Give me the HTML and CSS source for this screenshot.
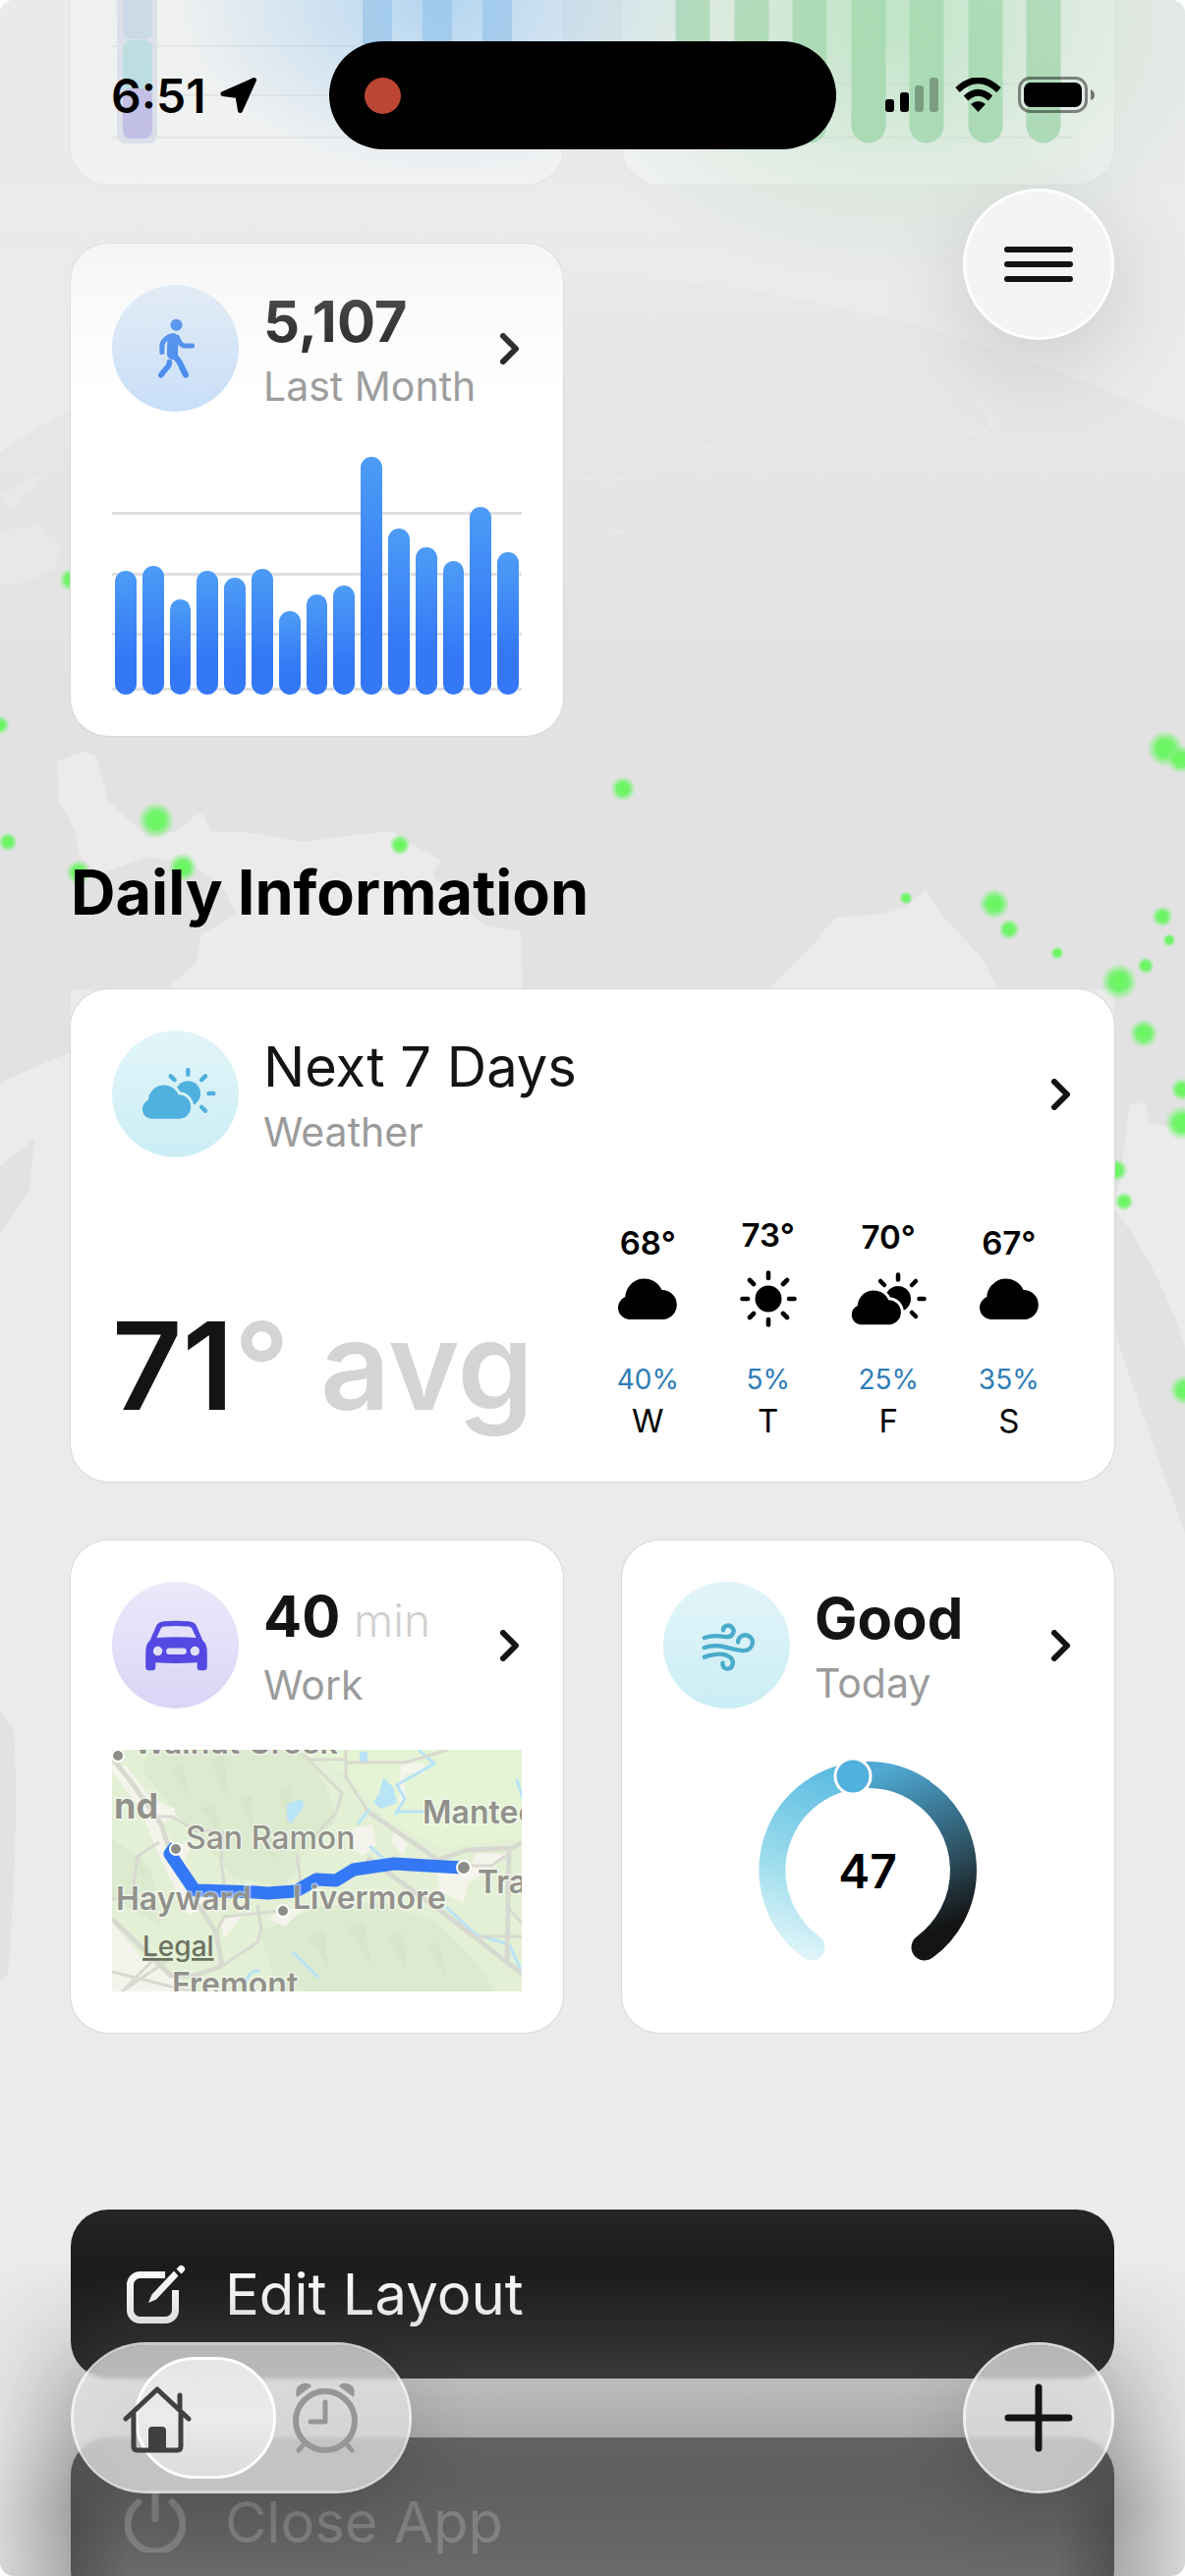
FILE: index.html
```html
<!DOCTYPE html>
<html lang="en">
<head>
    <meta charset="UTF-8">
    <meta name="viewport" content="width=device-width, initial-scale=1.0">
    <title>Dashboard</title>
    <link rel="stylesheet" href="styles.css">
</head>
<body>

<!-- shared icons -->
<svg class="defs" aria-hidden="true">
    <defs>
        <radialGradient id="glow">
            <stop offset="0" stop-color="#66f75c"/>
            <stop offset=".5" stop-color="#6ff468" stop-opacity=".95"/>
            <stop offset="1" stop-color="#8df28d" stop-opacity="0"/>
        </radialGradient>
        <linearGradient id="land" gradientUnits="userSpaceOnUse" x1="0" y1="280" x2="0" y2="700">
            <stop offset="0" stop-color="#e8e8e8"/>
            <stop offset="1" stop-color="#e2e2e2"/>
        </linearGradient>
        <mask id="cloudCut">
            <rect x="-10" y="-10" width="100" height="80" fill="#fff"/>
            <path transform="translate(0 18) scale(.84)" d="M13 42H48.500A15 15 0 0 0 46.600 12.100A19.500 19.500 0 0 0 9.300 19A12 12 0 0 0 13 42Z" fill="#000" stroke="#000" stroke-width="7"/>
        </mask>
    </defs>
    <symbol id="cloud" viewBox="0 0 64 42">
        <path d="M13 42H48.500A15 15 0 0 0 46.600 12.100A19.500 19.500 0 0 0 9.300 19A12 12 0 0 0 13 42Z" fill="currentColor"/>
    </symbol>
    <symbol id="sun" viewBox="0 0 58 58">
        <circle cx="29" cy="29" r="13.500" fill="currentColor"/>
        <path d="M29 2.500V8M29 50v5.500M2.500 29H8M50 29h5.500M10 10l4 4M44 44l4 4M10 48l4-4M44 14l4-4" stroke="currentColor" stroke-width="4.600" stroke-linecap="round"/>
    </symbol>
    <symbol id="cloud-sun" viewBox="0 0 78 54">
        <circle cx="49" cy="27" r="13" fill="currentColor" mask="url(#cloudCut)"/>
        <path d="M49 2.500V7.500M63 13l4-4M70.500 27h5M63 41l4 4M35 13l-4-4" stroke="currentColor" stroke-width="4.500" stroke-linecap="round"/>
        <path transform="translate(0 18) scale(.84)" d="M13 42H48.500A15 15 0 0 0 46.600 12.100A19.500 19.500 0 0 0 9.300 19A12 12 0 0 0 13 42Z" fill="currentColor"/>
    </symbol>
    <symbol id="chevron" viewBox="0 0 20 32">
        <path d="M3 3l13 13L3 29" fill="none" stroke="currentColor" stroke-width="6" stroke-linecap="round" stroke-linejoin="round"/>
    </symbol>
</svg>

<div class="screen">
    <!-- world map wallpaper -->
    <svg class="wallpaper" viewBox="0 0 1206 2622" preserveAspectRatio="xMidYMin slice" aria-hidden="true">
        <path fill="url(#land)" d="M0 460Q280 275 640 283Q920 300 1206 432V1150L1170 1143L1165 1123H1150L1140 1200L1134 1230Q1180 1290 1206 1370V1450Q1150 1400 1134 1340V1007H72V1071L50 1080L0 1102Z"/>
        <path fill="#ebebeb" d="M58 775L85 765L98 770L110 815L150 852L180 846L200 829L207 829L214 846L262 848L307 857L360 850L400 846L420 860L450 876L440 890L461 913L492 941L530 948L532 1010H165L200 980L204 952L240 930L225 900L195 880L150 872L100 890L80 870L76 845L60 815Z"/>
        <path fill="#ebebeb" d="M781 1007L820 970L850 934L900 930L923 923L942 906L961 934L1000 976L1015 1007Z"/>
        <path fill="#e8e8e8" d="M0 540L40 535L62 555L55 580L30 592L0 596ZM575 487Q610 478 652 486L620 490ZM606 542l36-3-14 6ZM0 505L60 470L10 520Z"/>
        <path fill="#e2e2e2" d="M35 1159L30 1210L0 1257V1187ZM1138 1243L1170 1340L1206 1400V1560L1170 1460L1136 1360ZM0 1740L14 1760Q20 1860 8 2010L0 2016Z"/>
        <path fill="none" stroke="#e9e9e9" stroke-width="3" d="M905 392q30 4 40 26M992 405q26 20 14 32q-10 6-22 2M715 452l16 10M80 852l6 10"/>
        <g fill="url(#glow)">
            <circle cx="72" cy="590" r="12"/><circle cx="0" cy="738" r="10"/><circle cx="8" cy="857" r="10"/>
            <circle cx="159" cy="835" r="19"/><circle cx="186" cy="883" r="15"/><circle cx="80" cy="888" r="13"/>
            <circle cx="407" cy="860" r="11"/><circle cx="634" cy="803" r="13"/><circle cx="922" cy="914" r="7"/>
            <circle cx="1012" cy="920" r="16"/><circle cx="1027" cy="946" r="11"/><circle cx="1076" cy="970" r="7"/>
            <circle cx="1183" cy="933" r="11"/><circle cx="1190" cy="957" r="7"/><circle cx="1166" cy="983" r="9"/>
            <circle cx="1139" cy="999" r="19"/><circle cx="1186" cy="762" r="19"/><circle cx="1202" cy="773" r="15"/>
            <circle cx="1164" cy="1052" r="15"/><circle cx="1203" cy="1109" r="12"/><circle cx="1203" cy="1143" r="18"/>
            <circle cx="1136" cy="1191" r="12"/><circle cx="1144" cy="1223" r="10"/><circle cx="1206" cy="1415" r="16"/>
        </g>
    </svg>

    <main class="content">
        <div class="row">
            <div class="card card-tail">
                <svg class="tail-chart" viewBox="0 0 417 146" aria-hidden="true">
                    <path d="M0 47h417M0 97h417M0 140h417" stroke="#ddd" stroke-width="2"/>
                    <path d="M5 0h41v136q0 10-10 10H15q-10 0-10-10z" fill="#c4cbe6"/>
                    <path d="M11 0h30v32q0 8-8 8H19q-8 0-8-8z" fill="#8fb4e0"/>
                    <rect x="11" y="41" width="30" height="60" rx="8" fill="#63c4d0"/>
                    <rect x="11" y="90" width="30" height="51" rx="8" fill="#7d6fe0"/>
                    <path d="M255 0h30v120h-30zM316 0h30v120h-30zM377 0h30v120h-30z" fill="#4f9ee4"/>
                </svg>
            </div>
            <div class="card card-tail">
                <svg class="tail-chart" viewBox="0 0 417 146" aria-hidden="true">
                    <path d="M0 85h417M0 140h417" stroke="#ddd" stroke-width="2"/>
                    <path d="M30-20v148M90-20v148M149-20v148M209-20v148M268-20v148M328-20v148M387-20v148" stroke="#3cb95a" stroke-width="35" stroke-linecap="round"/>
                </svg>
            </div>
        </div>

        <div class="row">
            <section class="card">
                <a class="card-head" href="#steps">
                    <svg class="badge badge-steps" viewBox="0 0 128 128" aria-hidden="true">
                        <circle cx="65" cy="40.500" r="6" fill="currentColor"/>
                        <g fill="none" stroke="currentColor" stroke-linecap="round" stroke-linejoin="round">
                            <path d="M61.500 54L61 70" stroke-width="11"/>
                            <path d="M58 52q-7 4-7.500 9V68" stroke-width="5"/>
                            <path d="M66 53q3 8 7 8.500H81" stroke-width="5"/>
                            <path d="M62 71q6 5 8 11L74.500 91" stroke-width="6"/>
                            <path d="M58 78q0 4-3 6L49.500 91" stroke-width="5.500"/>
                        </g>
                    </svg>
                    <span class="card-titles">
                        <strong class="title bold">5,107</strong>
                        <span class="subtitle">Last Month</span>
                    </span>
                    <svg class="chevron" aria-hidden="true"><use href="#chevron"/></svg>
                </a>
                <div class="bar-chart">
                    <span class="bar" style="height: 52%"></span>
                    <span class="bar" style="height: 54%"></span>
                    <span class="bar" style="height: 40%"></span>
                    <span class="bar" style="height: 52%"></span>
                    <span class="bar" style="height: 49%"></span>
                    <span class="bar" style="height: 53%"></span>
                    <span class="bar" style="height: 35%"></span>
                    <span class="bar" style="height: 42%"></span>
                    <span class="bar" style="height: 46%"></span>
                    <span class="bar" style="height: 100%"></span>
                    <span class="bar" style="height: 70%"></span>
                    <span class="bar" style="height: 62%"></span>
                    <span class="bar" style="height: 56%"></span>
                    <span class="bar" style="height: 79%"></span>
                    <span class="bar" style="height: 60%"></span>
                </div>
            </section>
            <div></div>
        </div>

        <h2 class="section-title">Daily Information</h2>

        <section class="card">
            <a class="card-head" href="#weather">
                <svg class="badge badge-weather" viewBox="0 0 128 128" aria-hidden="true">
                    <use href="#cloud-sun" x="29" y="37" width="76" height="53"/>
                </svg>
                <span class="card-titles">
                    <span class="title">Next 7 Days</span>
                    <span class="subtitle">Weather</span>
                </span>
                <svg class="chevron" aria-hidden="true"><use href="#chevron"/></svg>
            </a>
            <div class="forecast">
                <p class="average">71<span>° avg</span></p>
                <ul class="days">
                    <li>
                        <div class="reading">
                            <b>68°</b>
                            <svg class="icon-cloud" aria-hidden="true"><use href="#cloud"/></svg>
                        </div>
                        <span class="rain">40%</span>
                        <span class="day">W</span>
                    </li>
                    <li>
                        <div class="reading">
                            <b>73°</b>
                            <svg class="icon-sun" aria-hidden="true"><use href="#sun"/></svg>
                        </div>
                        <span class="rain">5%</span>
                        <span class="day">T</span>
                    </li>
                    <li>
                        <div class="reading">
                            <b>70°</b>
                            <svg class="icon-cloud-sun" aria-hidden="true"><use href="#cloud-sun"/></svg>
                        </div>
                        <span class="rain">25%</span>
                        <span class="day">F</span>
                    </li>
                    <li>
                        <div class="reading">
                            <b>67°</b>
                            <svg class="icon-cloud" aria-hidden="true"><use href="#cloud"/></svg>
                        </div>
                        <span class="rain">35%</span>
                        <span class="day">S</span>
                    </li>
                </ul>
            </div>
        </section>

        <div class="row">
            <section class="card">
                <a class="card-head" href="#commute">
                    <svg class="badge badge-commute" viewBox="0 0 128 128" aria-hidden="true">
                        <path fill="currentColor" fill-rule="evenodd" d="M34 70Q34 63 38.500 59L45 44Q47 40.500 53 40Q65 39 77 40Q83 40.500 85 44L91.500 59Q96 63 96 70V86Q96 89.500 92.500 89.500H89.500Q86 89.500 86 86V81.500Q65 83 44 81.500V86Q44 89.500 40.500 89.500H37.500Q34 89.500 34 86ZM45 56.500Q65 55 85 56.500L80.500 47Q79.500 45.500 77 45.200Q65 44.200 53 45.200Q50.500 45.500 49.500 47ZM41.500 70a4.700 4.700 0 1 0 9.400 0a4.700 4.700 0 1 0-9.400 0ZM79 70a4.700 4.700 0 1 0 9.400 0a4.700 4.700 0 1 0-9.400 0ZM58 67a3 3 0 0 0 0 6.500H72a3 3 0 0 0 0-6.500Z"/>
                    </svg>
                    <span class="card-titles">
                        <strong class="title bold">40 <small>min</small></strong>
                        <span class="subtitle">Work</span>
                    </span>
                    <svg class="chevron" aria-hidden="true"><use href="#chevron"/></svg>
                </a>
                <svg class="map" viewBox="0 0 417 246" preserveAspectRatio="xMidYMid slice">
                    <rect width="417" height="246" fill="#e3f0d6"/>
                    <!-- hills and flats -->
                    <path fill="#dcead0" d="M40 0h150l25 30 15 40-30 30-25 40-50-10-55-60-40-50zM150 185l60-25 60-5 60 20 40 40 20 31H170zM0 90l40 30 10 60-50-30z"/>
                    <path fill="#d3e2c8" opacity=".6" d="M60 20l20 30-8-34zM100 10l18 40-4-44zM90 60l20 26-6-30zM130 50l14 34-2-38zM170 40l10 36 4-40zM200 190l20 30-4-36zM240 180l24 40-8-44zM280 190l20 34-4-38zM320 200l20 30-8-34zM20 110l14 24-4-30zM150 90l16 24-4-30z"/>
                    <path fill="#e4f4d5" d="M205 0h212v90l-80 10-60-30-30-36z"/>
                    <path fill="#f5f4ec" d="M0 16l14 0 26 34 24 10 0 10-14 4 14 24 20-6-10 20 24 48-20 8-30-60-20-50-28-36zM0 176l30 36 40 24 10 10H0zM245 80l20-4 4 20-14 12-10-8zM294 14h24v10h-20v30h-6zM290 78l10 20-4 10-12-16zM328 116l36 6 6-16h30l-12 14-26 16-4 20-24-12zM160 172l16-12 16 4-16 16zM110 174l24-8-20 26z"/>
                    <path fill="#b9e3f6" d="M252 2h8v12h-8zM276 28l10 10 4 16-16 6-8-6 6-10zM178 56l14-6 4 6-14 20-4-6z"/>
                    <path fill="none" stroke="#b9e3f6" stroke-width="3" d="M312 0l16 14-38 22 8 14-10 16M262 60l-12 16M290 63h28M262 98l18 16M340 160l30 28 34 10 12 26M184 206l26 26M136 236q6-14 14-10M412 30l6 20"/>
                    <g fill="none" stroke="#d8d9d0" stroke-linejoin="round">
                        <path stroke-width="5" d="M0 8l22 28 28 40 10 30 20 40 26 40 6 34"/>
                        <path stroke-width="5" d="M0 172l60 58 24 0 28-10M262 64l70 48 30-10 46-2 9-6M260 110l80 58 77 60M404 102l-2 116"/>
                        <path stroke-width="3" d="M0 152h20l6-44 22-14M45 68h16l24 14 28 2-2 30 4 28M194 4l40 40-6 20-20 22M238 0v28l22 34M188 106l4 30M112 220l36-24 4-14-4-24M104 190l10-20 56-6M0 226l80 20M10 246l30-30M60 212l-50 34M200 10h38M238 13h60l44-13M372 190h45M402 160l15 16M330 112l20 6h36l14-10"/>
                    </g>
                    <path class="route" d="M65 98l-6 8 25 37 62 2 12 1 29-2 21-12 20 1 18-11 41-6 34 2 35 2"/>
                    <g class="stops">
                        <circle cx="6" cy="6" r="6"/><circle cx="65" cy="101" r="6"/>
                        <circle cx="174" cy="164" r="6"/><circle cx="358" cy="120" r="7"/>
                    </g>
                    <g class="places">
                        <text x="22" y="4">Walnut Creek</text>
                        <text class="city" x="2" y="70">nd</text>
                        <text class="town" x="75" y="101">San Ramon</text>
                        <text x="316" y="75">Manteca</text>
                        <text x="372" y="146">Tracy</text>
                        <text x="4" y="163">Hayward</text>
                        <text x="184" y="162">Livermore</text>
                        <text x="61" y="250">Fremont</text>
                    </g>
                    <a href="#legal"><text class="legal" x="31" y="210">Legal</text></a>
                </svg>
            </section>

            <section class="card">
                <a class="card-head" href="#air">
                    <svg class="badge badge-air" viewBox="0 0 128 128" aria-hidden="true">
                        <g fill="none" stroke="currentColor" stroke-width="4.300" stroke-linecap="round">
                            <path d="M41.500 56.500Q51 53.500 62 55.500C70 57 73 50 69.500 46C66 42.500 60.500 44.500 60.500 49"/>
                            <path d="M41.500 66.500C58 61 68 69.500 81 69.500C90 69.500 92.500 60 88 56C83 51.500 75.500 55 75.500 61"/>
                            <path d="M41.500 76C52 72.500 62 72 67 76C72.500 80 70.500 87.500 65 88C61.500 88 59.500 85 60 82"/>
                        </g>
                    </svg>
                    <span class="card-titles">
                        <strong class="title bold">Good</strong>
                        <span class="subtitle">Today</span>
                    </span>
                    <svg class="chevron" aria-hidden="true"><use href="#chevron"/></svg>
                </a>
                <svg class="gauge" viewBox="0 0 417 246">
                    <defs>
                        <linearGradient id="gaugeLow" gradientUnits="userSpaceOnUse" x1="120" y1="210" x2="190" y2="20">
                            <stop offset="0" stop-color="#e6f7fb"/>
                            <stop offset=".45" stop-color="#9adcec"/>
                            <stop offset="1" stop-color="#58b9e0"/>
                        </linearGradient>
                        <linearGradient id="gaugeHigh" gradientUnits="userSpaceOnUse" x1="215" y1="25" x2="290" y2="200">
                            <stop offset="0" stop-color="#50a9d2"/>
                            <stop offset=".3" stop-color="#3b7997"/>
                            <stop offset=".6" stop-color="#2a4a58"/>
                            <stop offset=".9" stop-color="#141414"/>
                        </linearGradient>
                    </defs>
                    <g fill="none" stroke-width="27">
                        <path d="M151 201A97 97 0 0 1 209 25.500" stroke="url(#gaugeLow)" stroke-linecap="round"/>
                        <path d="M266 201A97 97 0 0 0 262 42" stroke="url(#gaugeHigh)" stroke-linecap="round"/>
                        <path d="M208 25.500A97 97 0 0 1 264 43" stroke="url(#gaugeHigh)"/>
                    </g>
                    <circle cx="193" cy="27" r="18" fill="#50b0de" stroke="#fff" stroke-width="3"/>
                    <text x="208" y="141">47</text>
                </svg>
            </section>
        </div>

        <div class="actions">
            <button class="action" type="button">
                <svg viewBox="0 0 62 62" aria-hidden="true">
                    <path d="M41 11.500H15.500a10 10 0 0 0-10 10v26a10 10 0 0 0 10 10h26a10 10 0 0 0 10-10V27" fill="none" stroke="currentColor" stroke-width="7"/>
                    <path d="M24 40L27.500 31.500L50 7.500L54.500 12.500L32 36.500Z" fill="currentColor"/>
                    <path d="M52.500 5.500L55 3a3.500 3.500 0 0 1 5 5L57.500 10.500Z" fill="currentColor"/>
                </svg>
                Edit Layout
            </button>
            <button class="action action-close" type="button">
                <svg viewBox="0 0 62 62" aria-hidden="true">
                    <path d="M31 0v28M14 11a28 28 0 1 0 34 0" fill="none" stroke="currentColor" stroke-width="7" stroke-linecap="round"/>
                </svg>
                Close App
            </button>
        </div>
    </main>

    <div class="fade-top"></div>
    <div class="fade-bottom"></div>

    <div class="status-bar">
        <div class="status-left">
            <span>6:51</span>
            <svg width="38" height="38" viewBox="0 0 38 38" aria-hidden="true">
                <path d="M34.500 3.500L3 17.500L18 19.500L20.500 34.500Z" stroke="#000" stroke-width="5" stroke-linejoin="round"/>
            </svg>
        </div>
        <div class="island"><span class="rec-dot"></span></div>
        <div class="status-right">
            <svg width="54" height="36" viewBox="0 0 54 36" aria-hidden="true">
                <rect y="22" width="9" height="13" rx="3"/>
                <rect x="15" y="15" width="9" height="20" rx="3"/>
                <rect x="30" y="8" width="9" height="27" rx="3" opacity=".28"/>
                <rect x="45" width="9" height="35" rx="3" opacity=".28"/>
            </svg>
            <svg width="47" height="36" viewBox="0 0 47 36" aria-hidden="true">
                <path d="M2.500 12.500Q23.500-7 44.500 12.500M11 21Q23.500 9.500 36 21" fill="none" stroke="#000" stroke-width="6.500"/>
                <path d="M23.500 35L16 27Q23.500 21 31 27Z"/>
            </svg>
            <svg width="78" height="38" viewBox="0 0 78 38" aria-hidden="true">
                <rect x="1.500" y="1.500" width="68" height="34" rx="11" fill="none" stroke="#000" stroke-width="3" opacity=".45"/>
                <rect x="6" y="6" width="59" height="25" rx="7"/>
                <path d="M74 13q4 2 4 6t-4 5z" opacity=".5"/>
            </svg>
        </div>
    </div>

    <button class="round-btn menu-btn" type="button" aria-label="Menu">
        <svg width="70" height="36" viewBox="0 0 70 36" aria-hidden="true">
            <path d="M3 3h64M3 18h64M3 33h64" stroke="#141414" stroke-width="6" stroke-linecap="round"/>
        </svg>
    </button>

    <nav class="dock">
        <div class="tabs">
            <span class="tab-thumb"></span>
            <button class="tab active" type="button" aria-label="Home">
                <svg width="70" height="72" viewBox="0 0 70 72" aria-hidden="true">
                    <path d="M3 37L35 7L67 37M11 32V65q0 4 4 4H55q4 0 4-4V32M58 28V13" fill="none" stroke="currentColor" stroke-width="5" stroke-linecap="round" stroke-linejoin="round"/>
                    <path d="M26 68V49q0-4 4-4H40q4 0 4 4V68Z" fill="currentColor"/>
                </svg>
            </button>
            <button class="tab" type="button" aria-label="Alarms">
                <svg width="66" height="72" viewBox="0 0 66 72" aria-hidden="true">
                    <circle cx="33" cy="39" r="30" fill="none" stroke="currentColor" stroke-width="6"/>
                    <path d="M33 20V40H18M11 63l-5 6M55 63l5 6" fill="none" stroke="currentColor" stroke-width="5" stroke-linecap="round" stroke-linejoin="round"/>
                    <path d="M4 15Q1 3 11 1Q17 0 19 4ZM62 15Q65 3 55 1Q49 0 47 4Z" fill="currentColor"/>
                </svg>
            </button>
        </div>
        <button class="round-btn add-btn" type="button" aria-label="Add">
            <svg width="70" height="70" viewBox="0 0 70 70" aria-hidden="true">
                <path d="M35 4v62M4 35h62" stroke="#141414" stroke-width="7" stroke-linecap="round"/>
            </svg>
        </button>
    </nav>
</div>

</body>
</html>
```
FILE: styles.css
```css
* {
    box-sizing: border-box;
}

body {
    margin: 0;
    background-color: #fff;
    font-family: Inter, "Liberation Sans", sans-serif;
    color: #141414;
}

button {
    font: inherit;
    padding: 0;
    border: none;
    cursor: pointer;
}

a {
    color: inherit;
    text-decoration: none;
}

svg {
    display: block;
}

.defs {
    position: absolute;
    width: 0;
    height: 0;
}

.screen {
    position: relative;
    height: 100vh;
    overflow: hidden;
    border-radius: 14px;
    background-color: #ebebeb;
}

.wallpaper {
    position: absolute;
    top: 0;
    left: 0;
    width: 100%;
    height: 100%;
}

/* Scrolling content */
.content {
    position: relative;
    display: flex;
    flex-direction: column;
    gap: 60px;
    padding: 0 72px;
}

.row {
    display: grid;
    grid-template-columns: 1fr 1fr;
    gap: 60px;
}

.card {
    display: flex;
    flex-direction: column;
    gap: 42px;
    min-width: 0;
    padding: 42px;
    border-radius: 38px;
    background-color: #fff;
    box-shadow: 0 0 0 1px #d9d9d9;
}

.card-tail {
    padding-top: 0;
    border-radius: 0 0 38px 38px;
}

.tail-chart {
    width: 100%;
}

.card-head {
    display: flex;
    align-items: center;
    gap: 25px;
}

.badge {
    flex: none;
    width: 129px;
    height: 129px;
    border-radius: 50%;
}

.badge-steps {
    color: #3f86ee;
    background: linear-gradient(#deecf9, #c8def8);
}

.badge-weather, .badge-air {
    color: #50b0de;
    background: linear-gradient(#e2f5f9, #cbedf5);
}

.badge-air {
    color: #4aabca;
}

.badge-commute {
    color: #5549e3;
    background: linear-gradient(#ece9fb, #d8d5f6);
}

.card-titles {
    display: flex;
    flex-direction: column;
    flex: 1;
    gap: 8px;
    min-width: 0;
    white-space: nowrap;
}

.title {
    font-size: 56px;
    line-height: 68px;
    font-weight: 400;
}

.title.bold {
    font-size: 58px;
    font-weight: 700;
}

.title small {
    font-size: 46px;
    font-weight: 300;
    color: #d0d0d0;
}

.subtitle {
    font-size: 41px;
    line-height: 48px;
    color: #9b9b9b;
}

.chevron {
    flex: none;
    width: 20px;
    height: 32px;
    margin-right: 2px;
}

.section-title {
    margin: 60px 0 0;
    font-size: 63px;
    line-height: 78px;
    font-weight: 700;
    color: #000;
}

/* Steps chart */
.bar-chart {
    display: flex;
    align-items: flex-end;
    gap: 6px;
    height: 246px;
    padding: 4px 3px 0;
    background:
        linear-gradient(#e0e0e0, #e0e0e0) 0 60px / 100% 3px no-repeat,
        linear-gradient(#e0e0e0, #e0e0e0) 0 122px / 100% 3px no-repeat,
        linear-gradient(#e0e0e0, #e0e0e0) 0 183px / 100% 3px no-repeat,
        linear-gradient(#e0e0e0, #e0e0e0) 0 239px / 100% 3px no-repeat;
}

.bar {
    flex: 1;
    border-radius: 11px;
    background: linear-gradient(#4d9cf6, #3478f6 70%);
}

/* Weather */
.forecast {
    display: flex;
    justify-content: space-between;
    align-items: flex-end;
    height: 246px;
}

.average {
    margin: 0;
    font-size: 124px;
    line-height: 152px;
    font-weight: 600;
    white-space: nowrap;
}

.average span {
    color: #d4d4d4;
}

.days {
    display: grid;
    grid-template-columns: repeat(4, 1fr);
    width: 494px;
    margin: 0;
    padding: 0 4px 0 0;
    list-style: none;
    text-align: center;
    color: #000;
}

.days li {
    display: flex;
    flex-direction: column;
    align-items: center;
    gap: 6px;
}

.reading {
    display: flex;
    flex-direction: column;
    align-items: center;
    justify-content: center;
    gap: 16px;
    height: 120px;
    margin-bottom: 28px;
}

.reading b {
    font-size: 33px;
    line-height: 40px;
    font-weight: 600;
}

.icon-cloud {
    width: 64px;
    height: 42px;
}

.icon-sun {
    width: 58px;
    height: 58px;
}

.icon-cloud-sun {
    width: 78px;
    height: 54px;
}

.rain {
    font-size: 28px;
    line-height: 32px;
    color: #2f7cb5;
}

.day {
    font-size: 33px;
    line-height: 40px;
}

/* Commute map */
.map, .gauge {
    width: 100%;
    height: 246px;
}

.route {
    fill: none;
    stroke: #3478f6;
    stroke-width: 13px;
    stroke-linejoin: round;
}

.stops {
    fill: #8e8c88;
    stroke: #fff;
    stroke-width: 2px;
}

.places {
    font-size: 32px;
    font-weight: 600;
    fill: #92918b;
    stroke: rgba(255, 255, 255, 0.5);
    stroke-width: 3px;
    paint-order: stroke;
}

.places .city {
    font-size: 36px;
    font-weight: 700;
}

.places .town {
    font-weight: 500;
}

.legal {
    font-size: 28px;
    font-weight: 500;
    fill: #6c7262;
    text-decoration: underline;
}

.gauge text {
    font-size: 48px;
    font-weight: 600;
    text-anchor: middle;
    fill: #000;
}

/* Big buttons under the cards */
.actions {
    display: flex;
    flex-direction: column;
    gap: 60px;
    margin-top: 120px;
}

.action {
    display: flex;
    align-items: center;
    gap: 40px;
    height: 172px;
    padding: 0 55px;
    border-radius: 38px;
    background: linear-gradient(#252525, #191919 40%);
    color: #fff;
    font-size: 58px;
}

.action svg {
    width: 62px;
    height: 62px;
}

.action-close {
    background: linear-gradient(#565656, #2a2a2a 50%);
    color: #d8d8d8;
}

/* Content dissolves under the system bars */
.fade-top {
    position: absolute;
    top: 0;
    left: 0;
    right: 0;
    height: 410px;
    background:
        radial-gradient(closest-side, rgba(140, 195, 240, 0.6), rgba(140, 195, 240, 0)) 180px -180px / 540px 360px no-repeat,
        radial-gradient(closest-side, rgba(160, 220, 170, 0.6), rgba(180, 220, 185, 0.25) 60%, rgba(190, 220, 190, 0)) 560px -250px / 700px 540px no-repeat,
        linear-gradient(rgba(232, 234, 234, 0.7), rgba(232, 234, 234, 0.62) 188px, rgba(232, 233, 233, 0.45) 250px, rgba(232, 233, 233, 0.2) 320px, rgba(235, 235, 235, 0));
}

.fade-bottom {
    position: absolute;
    bottom: 0;
    left: 0;
    right: 0;
    height: 320px;
    background: linear-gradient(rgba(112, 112, 112, 0), rgba(112, 112, 112, 0.37) 118px, rgba(112, 112, 112, 0.52) 178px, rgba(108, 108, 108, 0.83) 250px, rgba(118, 118, 118, 0.85));
    mask-image: linear-gradient(to right, rgba(0, 0, 0, 0.2), #000 130px, #000 calc(100% - 130px), rgba(0, 0, 0, 0.2));
}

/* Status bar */
.status-bar {
    position: absolute;
    top: 42px;
    left: 0;
    right: 0;
    display: flex;
    align-items: center;
    height: 110px;
    padding: 0 92px 0 113px;
    color: #000;
}

.status-left {
    display: flex;
    align-items: center;
    gap: 14px;
    width: 222px;
    font-size: 48px;
    font-weight: 600;
}

.island {
    display: flex;
    align-items: center;
    width: 516px;
    height: 110px;
    padding-left: 36px;
    border-radius: 55px;
    background-color: #000;
}

.rec-dot {
    width: 37px;
    height: 37px;
    border-radius: 50%;
    background-color: #bc4633;
}

.status-right {
    display: flex;
    align-items: center;
    gap: 17px;
    margin-left: auto;
}

/* Floating controls */
.round-btn {
    display: flex;
    align-items: center;
    justify-content: center;
    width: 154px;
    height: 154px;
    border: 3px solid #fff;
    border-radius: 50%;
}

.menu-btn {
    position: absolute;
    top: 192px;
    right: 72px;
    background-color: #f4f4f4;
    box-shadow: 0 24px 90px rgba(0, 0, 0, 0.14);
}

.dock {
    position: absolute;
    left: 72px;
    right: 72px;
    bottom: 84px;
    display: flex;
    justify-content: space-between;
}

.tabs {
    position: relative;
    display: flex;
    width: 347px;
    height: 154px;
    border: 3px solid rgba(255, 255, 255, 0.75);
    border-radius: 77px;
}

.tabs, .add-btn {
    background-color: rgba(226, 226, 226, 0.76);
    background-clip: padding-box;
    box-shadow: 0 20px 80px rgba(0, 0, 0, 0.16);
    backdrop-filter: blur(2px);
}

.add-btn {
    border-color: rgba(255, 255, 255, 0.8);
}

.tab-thumb {
    position: absolute;
    top: 12px;
    left: 62px;
    width: 144px;
    height: 124px;
    border: 3px solid #fff;
    border-radius: 62px;
    background: linear-gradient(#e6e6e6, #ebebeb 50%, #dcdcdc);
}

.tab {
    position: relative;
    display: flex;
    flex: 1;
    align-items: center;
    justify-content: center;
    background: none;
    color: #969696;
}

.tab.active {
    color: #404040;
}
```
